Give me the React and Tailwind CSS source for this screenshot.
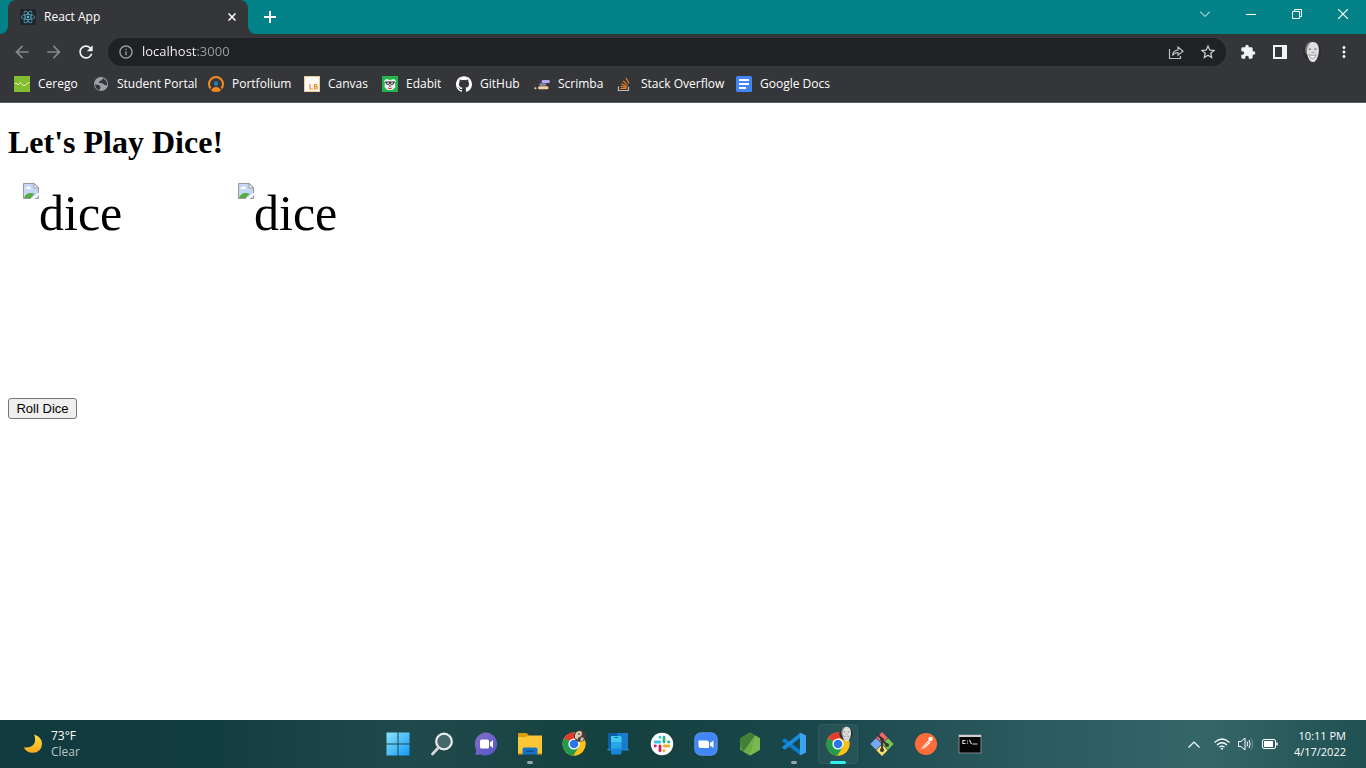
import React from "react";
import {
  MdArrowBack,
  MdArrowForward,
  MdRefresh,
  MdInfoOutline,
  MdStarBorder,
  MdExtension,
  MdMoreVert,
} from "react-icons/md";
import { SiReact, SiGithub } from "react-icons/si";

function Portrait({ className }) {
  return (
    <svg viewBox="0 0 20 24" className={className} aria-hidden="true">
      <ellipse cx="10" cy="11.500" rx="9.800" ry="10.500" fill="#2c2a2c" />
      <path d="M4 8C4 3 7 1 11 1s6.500 3 6.500 9c0 7-3 13-6.700 13C6.500 23 4 16 4 8z" fill="#dedede" />
      <path d="M2.500 8c1-5 3.500-7 7-7-3 2-5 5-5 11l.5 4c-2-2-3.200-5-2.500-8z" fill="#777" />
      <path d="M6.500 8.800h2.500M12.500 8.800h2.500" stroke="#6e6e6e" strokeWidth="1.300" fill="none" />
      <path d="M9.500 12.500h3" stroke="#a0a0a0" strokeWidth="1.200" fill="none" />
      <path d="M6.500 15q4 1.500 8 0-1 4-4 4t-4-4z" fill="#fff" stroke="#8a8a8a" strokeWidth=".9" />
    </svg>
  );
}

/* Bookmark icons */
const CeregoIcon = () => (
  <svg viewBox="0 0 16 16" className="size-4">
    <rect width="16" height="16" fill="#82bc2f" />
    <path d="M1 8q1-2 2 0t2 0q1-3 2.500-.5T10 9.500q2 0 3-1.500t2.500-1.500" stroke="#e6f5c8" fill="none" strokeWidth="1" />
  </svg>
);
const GlobeIcon = () => (
  <svg viewBox="0 0 16 16" className="size-4">
    <circle cx="8" cy="8" r="7" fill="#9aa0a6" />
    <path d="M2 8.500l4 .5 1.500 2-1 3.200Q2.500 13 2 8.500zM9.500 2.200l-.5 2-2.500.8-.5 2 3.500.3 2 1.700 2.600.3Q14.500 4 9.500 2.200z" fill="#35363a" />
  </svg>
);
const PortfoliumIcon = () => (
  <svg viewBox="0 0 16 16" className="size-4">
    <path d="M2.600 12.500A7 7 0 1 1 13.400 12.500" stroke="#f68b1f" strokeWidth="2" fill="none" />
    <circle cx="8" cy="7.500" r="2.200" fill="#2380a8" />
    <path d="M3 14.500q1.500-3.500 5-3.500t5 3.500Q10.500 16 8 16t-5-1.500z" fill="#f68b1f" />
  </svg>
);
const CanvasIcon = () => (
  <svg viewBox="0 0 16 16" className="size-4">
    <rect x=".5" y=".5" width="15" height="15" fill="#fffdfa" stroke="#f3c9a0" />
    <path d="M6 8v5h3M10.500 8.500v4.500h1.500q1.300 0 1.300-1.200T12 10.700h-1.500 1.200q1.100 0 1.100-1.100T11.700 8.500z" stroke="#f08a24" strokeWidth="1.200" fill="none" />
  </svg>
);
const EdabitIcon = () => (
  <svg viewBox="0 0 16 16" className="size-4">
    <rect width="16" height="16" fill="#25b34b" />
    <path d="M2 5l2-2 4 1 4-1 2 2-1 2 .5 4-3 3h-5l-3-3L3 7z" fill="#f3f3f3" />
    <path d="M3 6h10M4 6q0 2.500 2 2.500T8 6q0 2.500 2 2.500T12 6" stroke="#222" fill="none" />
    <path d="M6.500 9.500h3L8 11z" fill="#222" />
    <path d="M6 12q2 1.300 4 0" stroke="#a33" fill="none" />
  </svg>
);
const ScrimbaIcon = () => (
  <svg viewBox="0 0 16 16" className="size-4">
    <g strokeLinecap="round">
      <path d="M9 5.500h5.500" stroke="#b5a7ee" strokeWidth="3" />
      <path d="M6.500 8.500h4.500" stroke="#8f86a8" strokeWidth="2.500" />
      <path d="M5.500 11.800h7.500" stroke="#ecd0a0" strokeWidth="3" />
      <path d="M1.300 12.300h.2" stroke="#ecd0a0" strokeWidth="2" />
    </g>
  </svg>
);
const StackIcon = () => (
  <svg viewBox="0 0 16 16" className="size-4">
    <path d="M1.500 10.500v4h10v-4" stroke="#bcbbbb" strokeWidth="1.200" fill="none" />
    <path d="M3.500 12.500h6M3.700 10.300l5.900 1M4.500 7.700l5.300 2.800M6.200 4.800l4.300 4.300M9 2l3 5.200" stroke="#f48024" strokeWidth="1.200" />
  </svg>
);
const DocsIcon = () => (
  <svg viewBox="0 0 16 16" className="size-4">
    <rect width="16" height="16" rx="1.500" fill="#4286f5" />
    <path d="M3 4h10M3 8h10M3 12h7" stroke="#fff" strokeWidth="2" />
  </svg>
);
const GithubIcon = () => <SiGithub className="size-4 text-white" />;

const bookmarks = [
  { label: "Cerego", Icon: CeregoIcon, width: "w-[79px]" },
  { label: "Student Portal", Icon: GlobeIcon, width: "w-[115px]" },
  { label: "Portfolium", Icon: PortfoliumIcon, width: "w-[96px]" },
  { label: "Canvas", Icon: CanvasIcon, width: "w-[78px]" },
  { label: "Edabit", Icon: EdabitIcon, width: "w-[74px]" },
  { label: "GitHub", Icon: GithubIcon, width: "w-[78px]" },
  { label: "Scrimba", Icon: ScrimbaIcon, width: "w-[83px]" },
  { label: "Stack Overflow", Icon: StackIcon, width: "w-[119px]" },
  { label: "Google Docs", Icon: DocsIcon, width: "w-[110px]" },
];

/* Taskbar icons */
const WindowsIcon = () => (
  <svg viewBox="0 0 24 24" className="size-6">
    <defs>
      <linearGradient id="win" x1="0" y1="0" x2="1" y2="1">
        <stop offset="0" stopColor="#8be4ff" />
        <stop offset="1" stopColor="#1199f5" />
      </linearGradient>
    </defs>
    <path d="M.5.500h11v11H.5zM12.500.500h11v11h-11zM.5 12.500h11v11H.5zM12.500 12.500h11v11h-11z" fill="url(#win)" />
  </svg>
);
const SearchIcon = () => (
  <svg viewBox="0 0 24 24" className="size-6">
    <circle cx="14" cy="9.500" r="7.800" fill="#45696b" stroke="#eceded" strokeWidth="2.200" />
    <path d="M8.500 15.500L2.500 22" stroke="#d4d6d6" strokeWidth="2.800" strokeLinecap="round" />
  </svg>
);
const ChatIcon = () => (
  <svg viewBox="0 0 24 24" className="size-6">
    <defs>
      <linearGradient id="chat" x1="0" y1="0" x2="1" y2="1">
        <stop offset="0" stopColor="#8a6fc9" />
        <stop offset="1" stopColor="#4f55c4" />
      </linearGradient>
    </defs>
    <path d="M12.500.500A11.500 11.500 0 1 1 7 22.500L1.500 23l.7-5.500A11.500 11.500 0 0 1 12.500.500z" fill="url(#chat)" />
    <rect x="6" y="7.500" width="9" height="9" rx="1.500" fill="#fff" />
    <path d="M16 10.500l3-2.500v8l-3-2.500z" fill="#fff" />
  </svg>
);
const FolderIcon = () => (
  <svg viewBox="0 0 24 24" className="size-6">
    <path d="M0 2.500Q0 1 1.500 1H8l2.500 2.500H0z" fill="#e09c05" />
    <path d="M0 6V2h8.500l2 1.500H24v18.500H0z" fill="#fdc637" />
    <path d="M0 1.500h9l1.500 1.500L8 5H0z" fill="#dc9b08" />
    <path d="M4.500 22.500v-5q0-2 2-2h11q2 0 2 2v5z" fill="#1173c6" />
    <path d="M8 18.500h8v1.500H8z" fill="#0b4f91" />
    <path d="M0 21h4.500v1.500H0zM19.500 21H24v1.500h-4.500z" fill="#dda01c" />
  </svg>
);
function ChromeMark() {
  return (
    <svg viewBox="0 0 24 24" className="size-6">
      <circle cx="12" cy="12" r="11.500" fill="#fbc116" />
      <path d="M12 12L2 6.200A11.500 11.500 0 0 1 22 6.200L12 6.500z" fill="#e33b2e" />
      <path d="M12 12L2 6.200A11.500 11.500 0 0 0 11.500 23.500L17 15z" fill="#229a4b" />
      <path d="M17 15L11.500 23.500A11.500 11.500 0 0 0 22 6.500H12z" fill="#fbc116" />
      <circle cx="12" cy="12" r="5.600" fill="#fff" />
      <circle cx="12" cy="12" r="4.300" fill="#2d74e8" />
    </svg>
  );
}
const ChromeDogIcon = () => (
  <span className="relative block size-6">
    <ChromeMark />
    <svg viewBox="0 0 12 12" className="absolute -top-0.5 left-3 size-3">
      <circle cx="6" cy="6" r="6" fill="#493a33" />
      <path d="M1 5q1-4 5-4 2 0 2 2.500T5.500 7 4 10L1 8z" fill="#dccab5" />
      <path d="M7 7l3 1-1 3-3 .5z" fill="#cab9a8" />
      <circle cx="5" cy="4" r=".8" fill="#2c211d" />
    </svg>
  </span>
);
const ChromePortraitIcon = () => (
  <span className="relative block size-6">
    <ChromeMark />
    <Portrait className="absolute -top-1.5 left-3 size-4" />
  </span>
);
const PhoneIcon = () => (
  <svg viewBox="0 0 24 24" className="size-6">
    <path d="M2 1h20v16H2z" fill="#0f5fa6" />
    <path d="M11 1h11v16h-8z" fill="#1a7bc8" />
    <path d="M1 17h22.500l-1 1.500H2z" fill="#2387cf" />
    <rect x="5" y="4" width="10.500" height="18.500" rx="1" fill="#1687d9" />
    <path d="M5 5q0-1 1-1h8.500q1 0 1 1v5.500H5z" fill="#43c9f2" />
    <path d="M5 10.500h10.500v6H5z" fill="#25a7e6" />
    <path d="M8.500 5.500h3.500" stroke="#14608e" />
  </svg>
);
const SlackIcon = () => (
  <svg viewBox="0 0 24 24" className="size-6">
    <circle cx="12" cy="12" r="11.200" fill="#fff" />
    <g strokeWidth="2.800" strokeLinecap="round">
      <path d="M5.200 10h4.800" stroke="#36c5f0" />
      <path d="M10 5.200v.3" stroke="#36c5f0" />
      <path d="M14 5.200V10" stroke="#2eb67d" />
      <path d="M18.600 10h.2" stroke="#2eb67d" />
      <path d="M14 14h4.800" stroke="#ecb22e" />
      <path d="M14 18.600v.2" stroke="#ecb22e" />
      <path d="M10 14v4.800" stroke="#e01e5a" />
      <path d="M5.200 14h.2" stroke="#e01e5a" />
    </g>
  </svg>
);
const ZoomIcon = () => (
  <svg viewBox="0 0 24 24" className="size-6">
    <rect x=".8" y=".8" width="22.400" height="22.400" rx="6" fill="#4086f7" stroke="#6ba2fa" strokeWidth=".8" />
    <path d="M4.500 8.500h8q2.500 0 2.500 2.500v5H7q-2.500 0-2.500-2.500zM16 11l3.500-2.500v7.500L16 13.500z" fill="#fff" />
  </svg>
);
const NodeIcon = () => (
  <svg viewBox="0 0 24 24" className="size-6">
    <path d="M12 .5l10 5.700v11.500L12 23.500 2 17.700V6.200z" fill="#5a9c42" />
    <path d="M12 .5L2 6.200v6L5.500 19.700 17 3.400z" fill="#418036" />
    <path d="M17 3.400L5.500 19.700l6.500 3.800 10-5.800V6.200z" fill="#6bae48" />
    <path d="M17 3.400L22 6.200v11.500L12 23.500z" fill="#83bd59" opacity=".6" />
  </svg>
);
const CodeIcon = () => (
  <svg viewBox="0 0 24 24" className="size-6">
    <path d="M.3 8.200l1.800-1.600q.5-.4 1.100 0L18 18v5L.4 9.200q-.6-.5-.1-1z" fill="#0b7ecb" />
    <path d="M.3 15.800l1.800 1.600q.5.400 1.100 0L18 6V1L.4 14.800q-.6.500-.1 1z" fill="#1a8bd8" />
    <path d="M17 .2L23.200 3q.8.400.8 1.200v15.600q0 .8-.8 1.200L17 23.800q.9-.3.900-1.400V1.600Q17.900.5 17 .2z" fill="#39a5ef" />
  </svg>
);
const GitIcon = () => (
  <svg viewBox="0 0 24 24" className="size-6">
    <path d="M12 0l5.700 5.700L12 11.400 6.300 5.700z" fill="#f0646a" />
    <path d="M6 6.300l5.700 5.700L6 17.700.3 12z" fill="#78a8f5" />
    <path d="M18 6.300l5.700 5.700-5.700 5.700-5.700-5.700z" fill="#7bc451" />
    <path d="M12 12.600l5.700 5.700L12 24l-5.700-5.700z" fill="#fbdc68" />
    <path d="M8 3l4 4v11M12 8l5 5" stroke="#373332" strokeWidth="1.800" fill="none" />
    <circle cx="12" cy="7.500" r="2" fill="#373332" />
    <circle cx="17" cy="13" r="2" fill="#373332" />
    <circle cx="12" cy="18" r="2" fill="#373332" />
  </svg>
);
const PostmanIcon = () => (
  <svg viewBox="0 0 24 24" className="size-6">
    <circle cx="12" cy="12" r="11" fill="#ff6c37" />
    <path d="M14.500 8.500l2 2-5 5-5.500 2.500 3-4z" fill="#fff" />
    <circle cx="16.500" cy="7" r="2.200" fill="#fff" />
    <path d="M5.500 18.500l9-8" stroke="#d95427" strokeWidth=".7" />
  </svg>
);
const TerminalIcon = () => (
  <svg viewBox="0 0 24 24" className="size-6">
    <rect x="1" y="3" width="22" height="18" fill="#050505" stroke="#858585" />
    <path d="M1 3h22v2H1z" fill="#d0d0d0" />
    <path d="M7.500 8.500H4.800v3h2.700M9.500 8.500v1M9.500 10.800v1M11.500 8l2 4M14.500 12h5" stroke="#d8d8d8" strokeWidth="1.100" fill="none" />
  </svg>
);

const apps = [
  { name: "Start", Icon: WindowsIcon },
  { name: "Search", Icon: SearchIcon },
  { name: "Chat", Icon: ChatIcon },
  { name: "File Explorer", Icon: FolderIcon, running: true },
  { name: "Chrome profile", Icon: ChromeDogIcon },
  { name: "Your Phone", Icon: PhoneIcon },
  { name: "Slack", Icon: SlackIcon },
  { name: "Zoom", Icon: ZoomIcon },
  { name: "Node.js", Icon: NodeIcon },
  { name: "Visual Studio Code", Icon: CodeIcon, running: true },
  { name: "Google Chrome", Icon: ChromePortraitIcon, active: true },
  { name: "Git", Icon: GitIcon },
  { name: "Postman", Icon: PostmanIcon },
  { name: "Command Prompt", Icon: TerminalIcon },
];

function TabStrip() {
  return (
    <div className="flex h-[34px] bg-[#038387] pl-2 text-white">
      <div className="relative flex w-60 items-center rounded-t-lg bg-[#35363a] pr-2 pl-3">
        <svg viewBox="0 0 8 8" className="absolute bottom-0 -left-2 size-2">
          <path d="M8 0v8H0a8 8 0 0 0 8-8z" fill="#35363a" />
        </svg>
        <svg viewBox="0 0 8 8" className="absolute -right-2 bottom-0 size-2">
          <path d="M0 0v8h8a8 8 0 0 1-8-8z" fill="#35363a" />
        </svg>
        <span className="flex size-4 items-center justify-center rounded-xs bg-[#20232a]">
          <SiReact className="size-3.5 text-[#58bcd6]" />
        </span>
        <span className="ml-2 flex-1 text-xs">React App</span>
        <button aria-label="Close tab" className="flex size-4 items-center justify-center">
          <svg viewBox="0 0 8 8" className="size-2">
            <path d="M.5.500l7 7M7.500.500l-7 7" stroke="#fff" strokeWidth="1.500" />
          </svg>
        </button>
      </div>
      <button aria-label="New tab" className="ml-2 flex w-7 items-center justify-center">
        <svg viewBox="0 0 12 12" className="size-3">
          <path d="M6 0v12M0 6h12" stroke="#fff" strokeWidth="2" />
        </svg>
      </button>
      <div className="ml-auto flex h-7 items-center">
        <button aria-label="Search tabs" className="flex h-7 w-[46px] items-center justify-center">
          <svg viewBox="0 0 10 6" className="h-1.5 w-2.5">
            <path d="M0 .5l5 5 5-5" stroke="#fff" fill="none" />
          </svg>
        </button>
        <button aria-label="Minimize" className="flex h-7 w-[46px] items-center justify-center">
          <span className="h-px w-2.5 bg-white" />
        </button>
        <button aria-label="Restore" className="flex h-7 w-[46px] items-center justify-center">
          <svg viewBox="0 0 10 10" className="size-2.5">
            <path d="M.5 2.500h7v7h-7zM2.500 2.500v-2h7v7h-2" stroke="#fff" fill="none" />
          </svg>
        </button>
        <button aria-label="Close" className="flex h-7 w-[46px] items-center justify-center">
          <svg viewBox="0 0 10 10" className="size-2.5">
            <path d="M0 0l10 10M10 0L0 10" stroke="#fff" fill="none" strokeWidth="1.200" />
          </svg>
        </button>
      </div>
    </div>
  );
}

const toolButton = "flex h-8 w-8 shrink-0 items-center justify-center";

function Toolbar() {
  return (
    <div className="flex h-9 items-center px-1.5 text-[#f1f3f4]">
      <button aria-label="Back" className={toolButton}>
        <MdArrowBack className="size-5 text-[#87888b]" />
      </button>
      <button aria-label="Forward" className={toolButton}>
        <MdArrowForward className="size-5 text-[#87888b]" />
      </button>
      <button aria-label="Reload" className={toolButton}>
        <MdRefresh className="size-5" />
      </button>
      <div className="mx-1.5 flex h-7 flex-1 items-center rounded-full bg-[#202124] pr-0.5 pl-2.5">
        <MdInfoOutline className="size-4 text-[#9aa0a6]" />
        <input
          aria-label="Address"
          defaultValue="localhost:3000"
          className="ml-2 min-w-0 flex-1 bg-[linear-gradient(90deg,#ffffff_55px,#9aa0a6_55px)] bg-clip-text font-['Open_Sans',sans-serif] text-[13px] text-transparent outline-none"
        />
        <button aria-label="Share" className={toolButton}>
          <svg viewBox="0 0 16 16" className="size-4" fill="none" stroke="#bdc1c6" strokeWidth="1.200">
            <path d="M1.500 5v9.500h11V12" />
            <path d="M4.500 11.500q.5-5 5.500-5.500V3l5 4.200-5 4V8.500q-3.500 0-5.500 3z" />
          </svg>
        </button>
        <button aria-label="Bookmark this page" className={toolButton}>
          <MdStarBorder className="size-[18px] text-[#d0d3d6]" />
        </button>
      </div>
      <button aria-label="Extensions" className={toolButton}>
        <MdExtension className="size-4" />
      </button>
      <button aria-label="Side panel" className={toolButton}>
        <svg viewBox="0 0 14 14" className="size-3.5">
          <path d="M0 0h14v14H0zM2 2v10h7V2z" fill="#f1f3f4" fillRule="evenodd" />
        </svg>
      </button>
      <button aria-label="Profile" className={toolButton}>
        <Portrait className="h-[22px] w-5" />
      </button>
      <button aria-label="Menu" className={toolButton}>
        <MdMoreVert className="size-[18px]" />
      </button>
    </div>
  );
}

function BookmarkBar() {
  return (
    <nav className="flex h-[33px] items-start border-b border-[#5c5d61] pl-3.5">
      {bookmarks.map(({ label, Icon, width }) => (
        <a key={label} href="#" className={"flex h-7 shrink-0 items-center gap-2 whitespace-nowrap text-xs text-white " + width}>
          <Icon />
          {label}
        </a>
      ))}
    </nav>
  );
}

function Die() {
  return (
    <div className="mt-[15px] ml-[15px] flex h-[200px] w-[200px] items-start font-['Liberation_Serif',serif] text-[50px] leading-[60px]">
      <svg viewBox="0 0 16 16" className="size-4 shrink-0" aria-hidden="true">
        <path d="M.5.500h11l4 4v11H.5z" fill="#c5d6f6" stroke="#9a9a9a" />
        <path d="M11 .5v4.500h4.500z" fill="#fff" stroke="#9a9a9a" />
        <path d="M2.500 6q0-1.700 1.700-1.700Q5 2.500 6.500 3.500q1.500 0 1.500 2.500z" fill="#fff" />
        <path d="M1 15q2-5 6.500-5 3 0 4 1l-4 4z" fill="#53ac3c" />
        <path d="M16 9.500v2.500l-4.500 4H7.500z" fill="#fff" />
      </svg>
      dice
    </div>
  );
}

function Taskbar() {
  return (
    <footer className="grid h-12 grid-cols-[1fr_auto_1fr] items-center bg-[linear-gradient(90deg,#103a3d_0%,#123d40_15%,#20494b_30%,#14403f_45%,#1a474b_60%,#2b5a5f_75%,#356668_88%,#1f5052_100%)] text-xs leading-4 text-white">
      <button className="flex items-center gap-2 pl-[23px] text-left">
        <svg viewBox="0 0 20 20" className="size-5">
          <defs>
            <linearGradient id="moon" x1="0" y1="0" x2="0" y2="1">
              <stop offset="0" stopColor="#ffe33e" />
              <stop offset="1" stopColor="#f9a71e" />
            </linearGradient>
          </defs>
          <path d="M11 .5q8 2.500 8 9.500-.5 8.500-9.300 8.800-6 0-9-5.300 8.500.5 10.800-4.500Q13 5 11 .5z" fill="url(#moon)" />
        </svg>
        <span>
          <span className="block">73°F</span>
          <span className="block text-[#b9c5c6]">Clear</span>
        </span>
      </button>
      <div className="flex gap-1 pl-0.5">
        {apps.map(({ name, Icon, running, active }) => (
          <button
            key={name}
            aria-label={name}
            className={
              "relative flex size-10 items-center justify-center rounded " +
              (active ? "bg-white/5 ring-1 ring-white/5 ring-inset" : "")
            }
          >
            <Icon />
            {running && <span className="absolute bottom-0 h-[3px] w-1.5 rounded-full bg-[#98a6a7]" />}
            {active && <span className="absolute bottom-0 h-[3px] w-4 rounded-full bg-[#2ff0f0]" />}
          </button>
        ))}
      </div>
      <div className="flex items-center justify-end pr-5">
        <button aria-label="Show hidden icons" className="flex w-8 justify-center">
          <svg viewBox="0 0 12 7" className="h-[7px] w-3">
            <path d="M.5 6.500L6 1l5.500 5.500" stroke="#fff" strokeWidth="1.200" fill="none" />
          </svg>
        </button>
        <button aria-label="Network, sound and battery" className="mr-4 ml-1 flex items-center gap-2">
          <svg viewBox="0 0 16 12" className="h-3 w-4" fill="none" stroke="#fff" strokeWidth="1.200">
            <path d="M.5 4.500q7.500-7 15 0M3 7q5-4.500 10 0M5.500 9.300q2.500-2.200 5 0" />
            <circle cx="8" cy="10.700" r="1" fill="#fff" stroke="none" />
          </svg>
          <svg viewBox="0 0 16 14" className="h-3.5 w-4" fill="none" stroke="#fff">
            <path d="M.5 4.500H3L7 1v12L3 9.500H.5zM9 4.500q1.500 2.500 0 5M11 3q2.500 4 0 8" />
            <path d="M13 1.500q3.500 5.500 0 11" stroke="#71908f" />
          </svg>
          <svg viewBox="0 0 16 10" className="h-2.5 w-4">
            <rect x=".5" y=".5" width="13" height="9" rx="1.500" fill="none" stroke="#fff" />
            <rect x="2" y="2" width="9" height="6" fill="#fff" />
            <path d="M15 3.500v3" stroke="#fff" strokeWidth="1.500" />
          </svg>
        </button>
        <button className="text-right text-[11px] whitespace-nowrap">
          <span className="block">10:11 PM</span>
          <span className="block">4/17/2022</span>
        </button>
      </div>
    </footer>
  );
}

export default function App() {
  return (
    <div className="flex min-h-screen flex-col bg-white font-['Open_Sans',sans-serif]">
      <header className="bg-[#35363a]">
        <TabStrip />
        <Toolbar />
        <BookmarkBar />
      </header>
      <main className="flex-1 px-2 pt-[21px] text-black">
        <h1 className="font-['Liberation_Serif',serif] text-[32px] leading-9 font-bold">Let's Play Dice!</h1>
        <div className="mt-2 mb-[15px] flex flex-wrap">
          <Die />
          <Die />
        </div>
        <button className="block h-[21px] min-w-[69px] rounded-[3px] border border-[#767676] bg-[#efefef] px-1.5 font-['Liberation_Sans',sans-serif] text-[13px] leading-none">
          Roll Dice
        </button>
      </main>
      <Taskbar />
    </div>
  );
}
